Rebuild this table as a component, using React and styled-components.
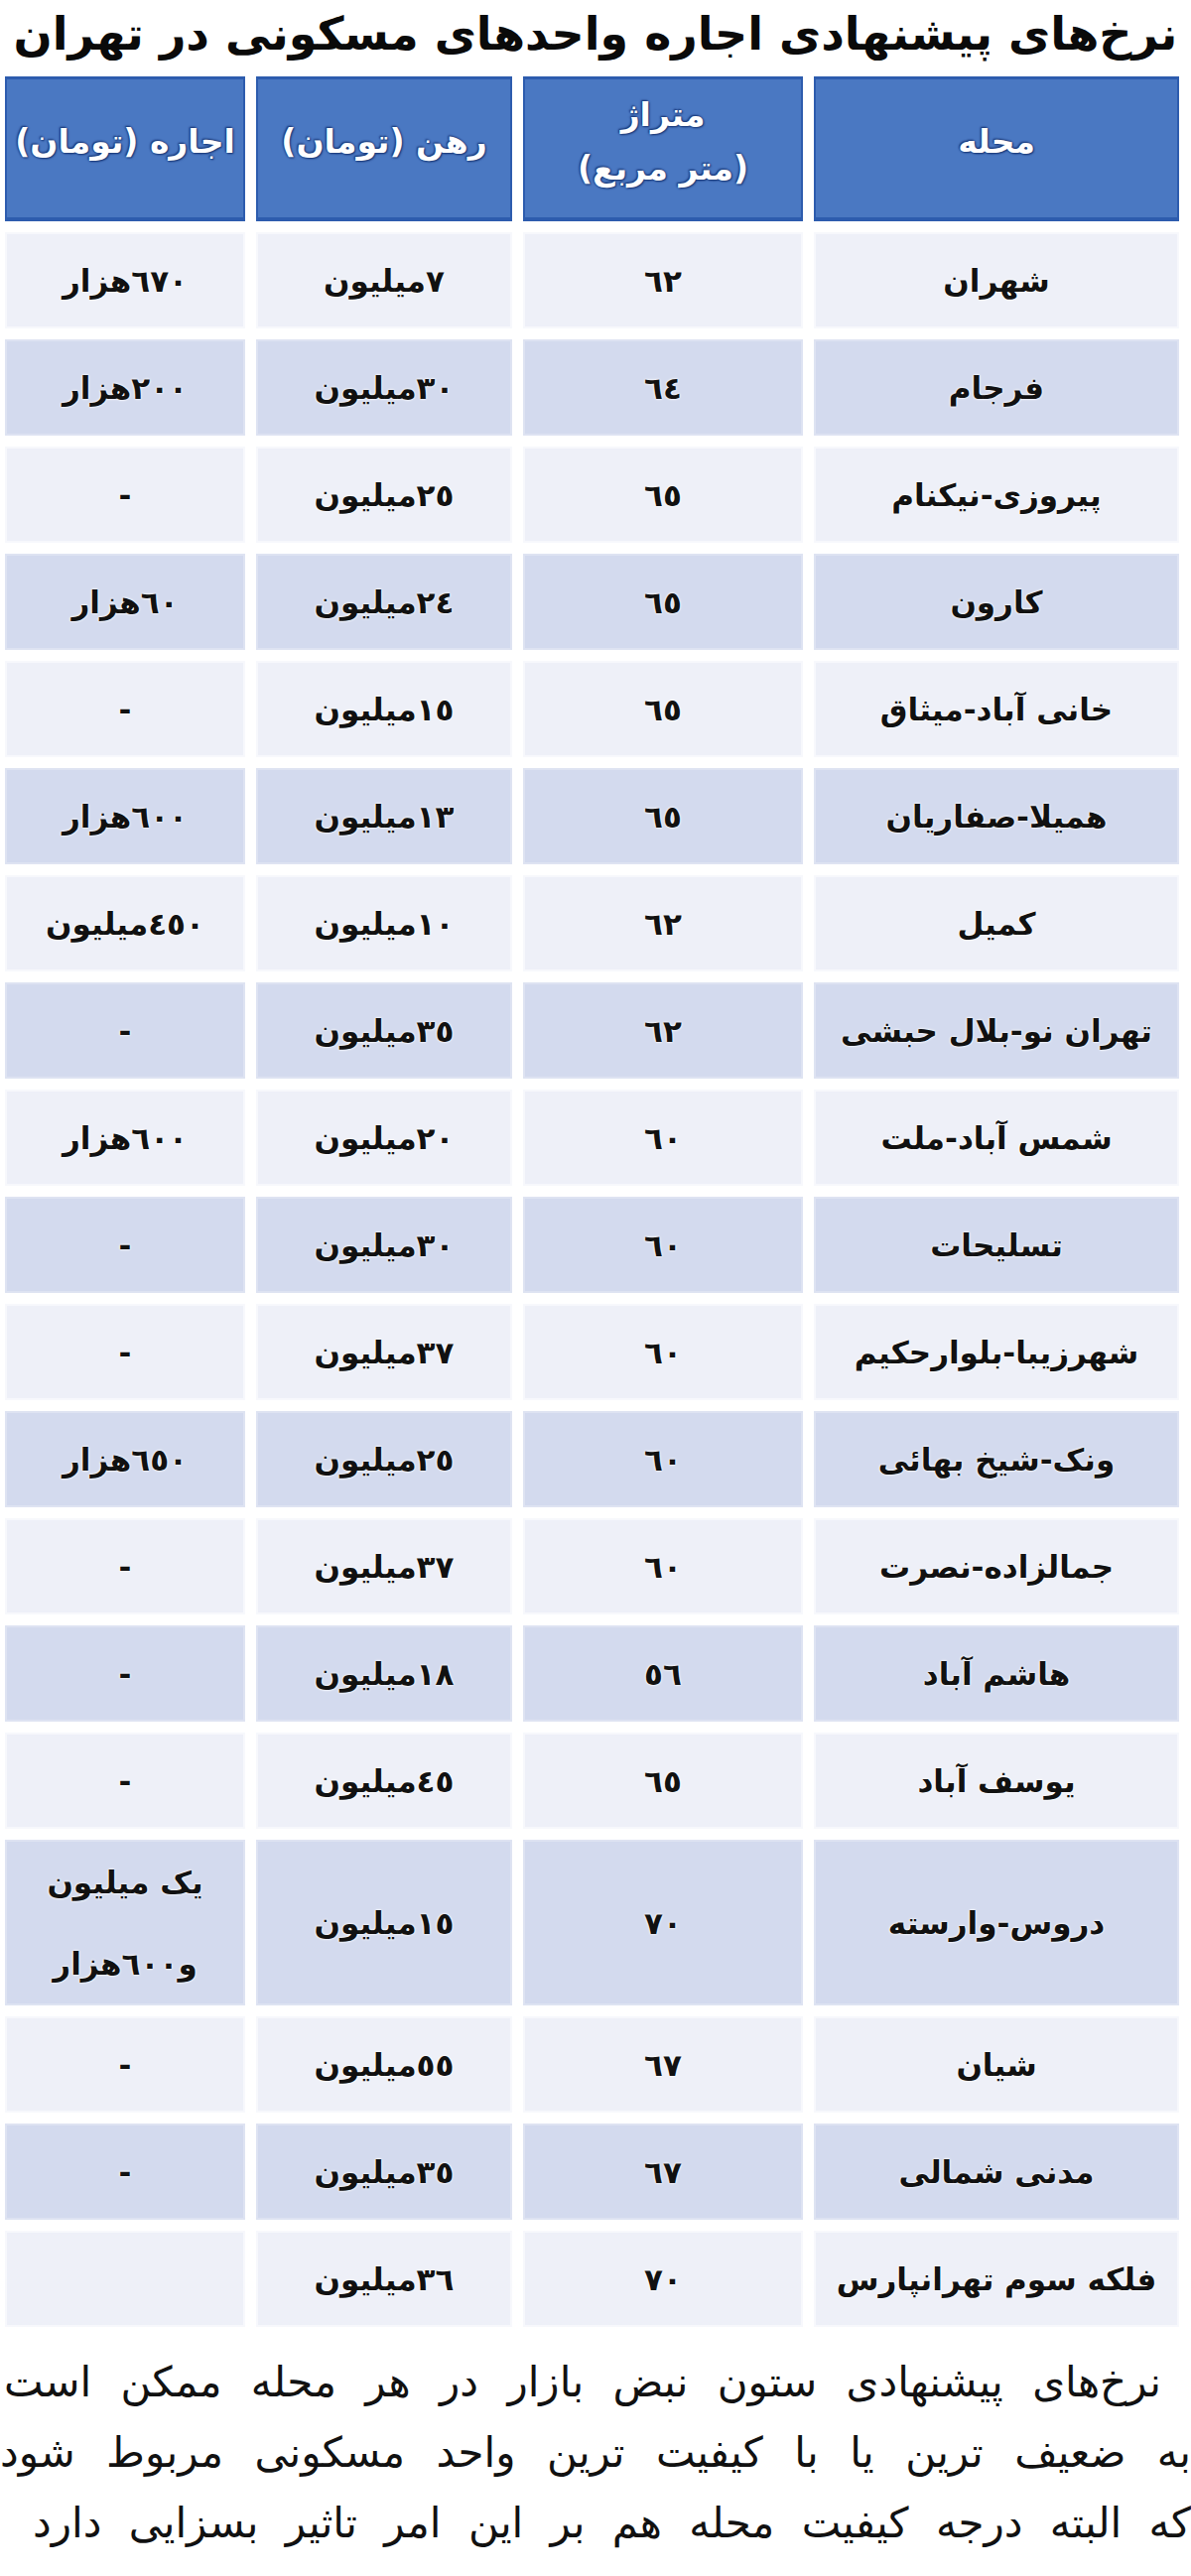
import React from "react";
import styled, { createGlobalStyle } from "styled-components";

const GlobalStyle = createGlobalStyle`
  html, body {
    margin: 0;
    padding: 0;
    background: #ffffff;
  }
  body {
    font-family: "DejaVu Sans", "Noto Sans", sans-serif;
    color: #000;
  }
`;

const Page = styled.div`
  width: 1200px;
  direction: rtl;
  overflow: hidden;
`;

const Title = styled.h1`
  margin: 0;
  height: 77px;
  line-height: 68px;
  font-size: 46px;
  font-weight: 700;
  text-align: center;
  white-space: nowrap;
  color: #0a0a0a;
`;

const Table = styled.div`
  display: grid;
  grid-template-columns: 368px 282px 258px 242px;
  column-gap: 11px;
  row-gap: 11px;
  padding-right: 12px;
`;

const HeadCell = styled.div`
  height: 146px;
  box-sizing: border-box;
  background: #4a78c2;
  border: 2px solid #2d5cae;
  border-top-width: 3px;
  border-bottom-width: 4px;
  display: flex;
  flex-direction: column;
  align-items: center;
  justify-content: center;
  padding-bottom: 14px;
  color: #fff;
  font-weight: 700;
  font-size: 33px;
  line-height: 54px;
  white-space: nowrap;
  overflow: hidden;
  text-shadow: 0 0 2px #1b3f86, 1px 1px 2px #16326e, -1px -1px 2px #16326e;
`;

const Cell = styled.div`
  height: ${(p) => (p.$tall ? 167 : 97)}px;
  box-sizing: border-box;
  background: ${(p) => (p.$dark ? "#d3daee" : "#eef0f8")};
  box-shadow: inset 0 0 0 2px
    ${(p) => (p.$dark ? "rgba(255,255,255,0.25)" : "rgba(255,255,255,0.5)")};
  display: flex;
  flex-direction: column;
  align-items: center;
  justify-content: center;
  font-weight: 700;
  font-size: 31px;
  line-height: 82px;
  white-space: nowrap;
  color: #111;
  text-shadow: 0 0 3px #fff, 0 0 2px #fff;
`;

const Note = styled.div`
  margin-top: 20px;
  font-size: 42px;
  line-height: 71px;
  color: #111;
`;

const NoteLine = styled.div`
  text-align: justify;
  text-align-last: justify;
  white-space: nowrap;
  padding-right: ${(p) => p.$right || 0}px;
  padding-left: ${(p) => p.$left || 0}px;
`;

const rows = [
  ["شهران", "٦٢", "٧میلیون", "٦٧٠هزار"],
  ["فرجام", "٦٤", "٣٠میلیون", "٢٠٠هزار"],
  ["پیروزی-نیکنام", "٦٥", "٢٥میلیون", "-"],
  ["کارون", "٦٥", "٢٤میلیون", "٦٠هزار"],
  ["خانی آباد-میثاق", "٦٥", "١٥میلیون", "-"],
  ["همیلا-صفاریان", "٦٥", "١٣میلیون", "٦٠٠هزار"],
  ["کمیل", "٦٢", "١٠میلیون", "٤٥٠میلیون"],
  ["تهران نو-بلال حبشی", "٦٢", "٣٥میلیون", "-"],
  ["شمس آباد-ملت", "٦٠", "٢٠میلیون", "٦٠٠هزار"],
  ["تسلیحات", "٦٠", "٣٠میلیون", "-"],
  ["شهرزیبا-بلوارحکیم", "٦٠", "٣٧میلیون", "-"],
  ["ونک-شیخ بهائی", "٦٠", "٢٥میلیون", "٦٥٠هزار"],
  ["جمالزاده-نصرت", "٦٠", "٣٧میلیون", "-"],
  ["هاشم آباد", "٥٦", "١٨میلیون", "-"],
  ["یوسف آباد", "٦٥", "٤٥میلیون", "-"],
  ["دروس-وارسته", "٧٠", "١٥میلیون", ["یک میلیون", "و٦٠٠هزار"]],
  ["شیان", "٦٧", "٥٥میلیون", "-"],
  ["مدنی شمالی", "٦٧", "٣٥میلیون", "-"],
  ["فلکه سوم تهرانپارس", "٧٠", "٣٦میلیون", ""],
];

const heads = [["محله"], ["متراژ", "(متر مربع)"], ["رهن (تومان)"], ["اجاره (تومان)"]];

const Lines = ({ value }) =>
  Array.isArray(value) ? value.map((v) => <span key={v}>{v}</span>) : value;

export default function App() {
  return (
    <Page>
      <GlobalStyle />
      <Title>نرخ‌های پیشنهادی اجاره واحدهای مسکونی در تهران</Title>
      <Table>
        {heads.map((h, i) => (
          <HeadCell key={i}>
            <Lines value={h.length > 1 ? h : h[0]} />
          </HeadCell>
        ))}
        {rows.map((row, r) =>
          row.map((value, c) => (
            <Cell key={r + "-" + c} $dark={r % 2 === 1} $tall={r === 15}>
              <Lines value={value} />
            </Cell>
          ))
        )}
      </Table>
      <Note>
        <NoteLine $right={30} $left={4}>
          نرخ‌های پیشنهادی ستون نبض بازار در هر محله ممکن است
        </NoteLine>
        <NoteLine>به ضعیف ترین یا با کیفیت ترین واحد مسکونی مربوط شود</NoteLine>
        <NoteLine $left={33}>
          که البته درجه کیفیت محله هم بر این امر تاثیر بسزایی دارد
        </NoteLine>
      </Note>
    </Page>
  );
}
